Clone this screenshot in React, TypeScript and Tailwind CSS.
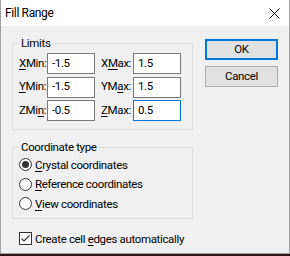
import { ReactNode } from 'react';

const font = { fontFamily: 'Roboto, "Segoe UI", sans-serif' };

/** Access-key label with one underlined letter. */
function Key({ pre = '', k, post = '' }: { pre?: string; k: string; post?: string }) {
  return (
    <span className="whitespace-nowrap">
      {pre}
      <u className="underline decoration-1 underline-offset-[2px]">{k}</u>
      {post}
    </span>
  );
}

function Field({ value, focused = false }: { value: string; focused?: boolean }) {
  return (
    <div
      className={`flex h-[21px] w-[48px] items-center border bg-white pl-[4px] text-black ${
        focused ? 'border-[#0078d7]' : 'border-[#7a7a7a]'
      }`}
    >
      {value}
    </div>
  );
}

function Group({ title, children, className = '' }: { title: string; children: ReactNode; className?: string }) {
  return (
    <fieldset className={`w-[181px] border border-[#dcdcdc] pl-[6px] ${className}`}>
      <legend className="px-[2px] leading-[16px] text-black">{title}</legend>
      {children}
    </fieldset>
  );
}

function Radio({ checked = false, children }: { checked?: boolean; children: ReactNode }) {
  return (
    <div className="flex h-[19.5px] items-center gap-[3px]">
      <span className="flex h-[13px] w-[13px] items-center justify-center rounded-full border border-[#333] bg-white">
        {checked && <span className="h-[7px] w-[7px] rounded-full bg-[#333]" />}
      </span>
      <span className="leading-[16px]">{children}</span>
    </div>
  );
}

export default function App() {
  return (
    <div className="h-[256px] w-[290px] bg-[#2a1616] text-[11.5px] tracking-[-0.35px] text-black" style={font}>
      <div className="flex h-[254px] w-[290px] flex-col border-x border-b border-[#a0a0a0] bg-[#f0f0f0]">
        {/* Title bar */}
        <div className="flex h-[26px] shrink-0 items-center justify-between bg-white pl-[4px] pr-[9px]">
          <span className="text-[12px] leading-[16px]">Fill Range</span>
          <svg width="11" height="11" viewBox="0 0 11 11" aria-hidden="true">
            <path d="M0.5 0.5L10.5 10.5M10.5 0.5L0.5 10.5" stroke="#000" strokeWidth="1" />
          </svg>
        </div>

        <div className="flex pl-[11px] pt-[9px]">
          {/* Left column */}
          <div className="flex flex-col">
            <Group title="Limits" className="pb-[8px]">
              <div className="mt-[2px] grid grid-cols-[28px_48px_38px_48px] items-center gap-y-[2.5px]">
                <Key k="X" post="Min:" />
                <Field value="-1.5" />
                <span className="pl-[6px]">
                  <Key pre="X" k="M" post="ax:" />
                </span>
                <Field value="1.5" />

                <Key k="Y" post="Min:" />
                <Field value="-1.5" />
                <span className="pl-[6px]">
                  <Key pre="YM" k="a" post="x:" />
                </span>
                <Field value="1.5" />

                <Key pre="ZMi" k="n" post=":" />
                <Field value="-0.5" />
                <span className="pl-[6px]">
                  <Key k="Z" post="Max:" />
                </span>
                <Field value="0.5" focused />
              </div>
            </Group>

            <Group title="Coordinate type" className="mt-[9px] pb-[4px]">
              <Radio checked>
                <Key k="C" post="rystal coordinates" />
              </Radio>
              <Radio>
                <Key k="R" post="eference coordinates" />
              </Radio>
              <Radio>
                <Key k="V" post="iew coordinates" />
              </Radio>
            </Group>

            <div className="mt-[12px] flex items-center gap-[3px] whitespace-nowrap pl-[7px]">
              <span className="flex h-[13px] w-[13px] shrink-0 items-center justify-center border border-[#333] bg-white">
                <svg width="11" height="11" viewBox="0 0 11 11" aria-hidden="true">
                  <path d="M1.5 5.5L4 8L9.5 2.5" fill="none" stroke="#333" strokeWidth="1.2" />
                </svg>
              </span>
              <span className="leading-[16px]">
                <Key pre="Create cell " k="e" post="dges automatically" />
              </span>
            </div>
          </div>

          {/* Buttons */}
          <div className="ml-[12px] flex flex-col gap-[6px] pt-[4px]">
            <button className="flex h-[21px] w-[73px] items-center justify-center border-2 border-[#0078d7] bg-[#e1e1e1]">
              OK
            </button>
            <button className="flex h-[21px] w-[73px] items-center justify-center border border-[#adadad] bg-[#e1e1e1]">
              Cancel
            </button>
          </div>
        </div>
      </div>
    </div>
  );
}
